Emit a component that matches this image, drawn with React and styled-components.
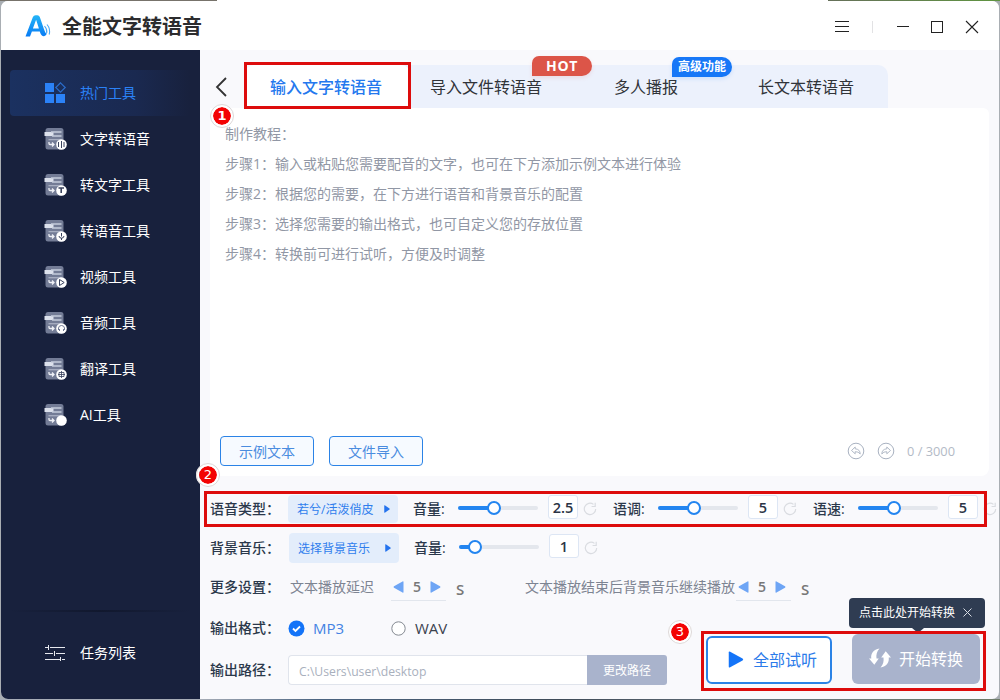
import React, { useState } from "react";
import styled, { createGlobalStyle } from "styled-components";

const GlobalStyle = createGlobalStyle`
  * {
    box-sizing: border-box;
  }
  body {
    margin: 0;
    font-family: "Open Sans", "Noto Sans CJK SC", sans-serif;
    font-size: 14px;
    color: #2b3445;
  }
  button {
    font-family: inherit;
    padding: 0;
    margin: 0;
  }
`;

const Desktop = styled.div`
  width: 1000px;
  height: 700px;
  padding: 1px;
  overflow: hidden;
  background:
    linear-gradient(90deg, #77736b 217px, #fff 217px, #fff 828px, #66705a 828px, #5f9440) top / 100% 1px no-repeat,
    linear-gradient(90deg, #a7adb7 0 200px, #4b6481 320px, #3f4b58 560px, #66727c 760px, #6e7b68) bottom / 100% 1px no-repeat,
    #a9aeb3;
`;

const Window = styled.div`
  position: relative;
  display: flex;
  flex-direction: column;
  height: 698px;
  border-radius: 7px;
  overflow: hidden;
  background: #f9f9fc;
`;

const TitleBar = styled.header`
  display: flex;
  align-items: center;
  height: 49px;
  flex: none;
  padding: 0 20px 0 23px;
  background: #fff;
`;

const AppName = styled.h1`
  margin: 0 auto 0 10px;
  padding-top: 2px;
  font-size: 20px;
  line-height: 30px;
  font-weight: 700;
  color: #2c2c2e;
`;

const Body = styled.div`
  display: flex;
  flex: 1;
  min-height: 0;
`;

const Sidebar = styled.nav`
  display: flex;
  flex-direction: column;
  width: 199px;
  padding: 20px 10px 23px 9px;
  background: #18213d;
`;

const NavItem = styled.div`
  display: flex;
  align-items: center;
  gap: 12px;
  height: 46px;
  padding: 0 0 2px 34px;
  border-radius: 4px;
  color: ${(props) => (props.$active ? "#2b82f7" : "#fff")};
  background: ${(props) =>
    props.$active ? "linear-gradient(90deg, #1b3160, #1a2950 70%, #18213d)" : "none"};

  svg {
    margin-top: 2px;
  }
`;

const NavDivider = styled.div`
  height: 2px;
  margin: auto 0 18px;
  background: linear-gradient(90deg, #18213d, #11182e 50%, #18213d);
`;

const Main = styled.main`
  flex: 1;
  min-width: 0;
`;

const TabRow = styled.div`
  display: flex;
  align-items: flex-end;
  height: 58px;
  padding-left: 14px;
`;

const BackIcon = styled.svg`
  flex: none;
  margin: 0 15px 10px 0;
`;

const Tabs = styled.div`
  display: flex;
  height: 43px;
  width: 644px;
  background: #ecf1fc;
  border-radius: 10px 10px 0 0;
`;

const Tab = styled.div`
  position: relative;
  display: flex;
  align-items: center;
  justify-content: center;
  width: ${(props) => (props.$active ? 167 : 160)}px;
  padding: 0 ${(props) => (props.$active ? 3 : 0)}px 2px 0;
  margin-right: ${(props) => (props.$active ? -5 : 0)}px;
  flex: none;
  border-radius: 10px 10px 0 0;
  font-size: 16px;
  font-weight: ${(props) => (props.$active ? 500 : 400)};
  color: ${(props) => (props.$active ? "#2478ee" : "#303338")};
  background: ${(props) => (props.$active ? "#fff" : "none")};
`;

const TabBadge = styled.span`
  position: absolute;
  left: ${(props) => props.$left}px;
  top: ${(props) => props.$top}px;
  width: 60px;
  height: 20px;
  border-radius: 7px 10px 10px 0;
  text-align: center;
  line-height: 20px;
  font-weight: 700;
  font-size: ${(props) => props.$size}px;
  letter-spacing: ${(props) => (props.$size > 12 ? 0.6 : 0)}px;
  color: #fff;
  background: ${(props) => props.$color};
  box-shadow: 0 2px 4px ${(props) => props.$color}22;
`;

const Editor = styled.section`
  display: flex;
  flex-direction: column;
  height: 368px;
  margin: 0 10px;
  padding: 11px 34px 10px 10px;
  background: #fff;
  border-radius: 0 6px 8px 8px;
`;

const Guide = styled.p`
  margin: 0;
  padding-left: 5px;
  line-height: 30px;
  color: #9197a5;
`;

const EditorFooter = styled.div`
  display: flex;
  align-items: center;
  gap: 15px;
  height: 30px;
  margin-top: auto;
`;

const OutlineButton = styled.button`
  width: 94px;
  height: 30px;
  border: 1px solid #2b83e6;
  border-radius: 4px;
  background: #f6faff;
  color: #4a8cdf;
  font-size: 14px;
`;

const EditorTools = styled.div`
  display: flex;
  align-items: center;
  gap: 12px;
  margin-left: auto;
  font-size: 12.8px;
  color: #b3bac6;
`;

const Settings = styled.section`
  padding: 15px 0 0 10px;
`;

const Row = styled.div`
  display: flex;
  align-items: center;
  height: 36px;
  margin-bottom: ${(props) => props.$after || 0}px;

  > * {
    flex-shrink: 0;
  }
`;

const RowLabel = styled.div`
  width: ${(props) => props.$width || 78}px;
  padding-bottom: 2px;
  font-weight: 500;
  white-space: nowrap;
  color: #2b384b;
`;

const Picker = styled.button`
  display: flex;
  align-items: center;
  justify-content: space-between;
  width: 110px;
  height: ${(props) => props.$height || 28}px;
  margin-right: 15px;
  padding: 0 8px 0 9px;
  border: 0;
  border-radius: 4px;
  background: #e3edfb;
  color: #2f7ded;
  font-size: 12px;
`;

const SliderLabel = styled.span`
  width: 45px;
  padding-bottom: 2px;
  font-weight: 500;
  color: #2b384b;
`;

const Track = styled.div`
  position: relative;
  width: 80px;
  height: 4px;
  margin: -2px 10px 0 0;
  border-radius: 2px;
  background: #e4e7ed;
`;

const Fill = styled.div`
  height: 4px;
  border-radius: 2px;
  background: #2385f0;
`;

const Thumb = styled.div`
  position: absolute;
  top: -5px;
  width: 14px;
  height: 14px;
  margin-left: -7px;
  border: 2px solid #2385f0;
  border-radius: 50%;
  background: #fff;
`;

const ValueBox = styled.div`
  width: 30px;
  height: 24px;
  margin: -4px 5px 0 0;
  border: 1px solid #dde6f4;
  border-radius: 3px;
  background: #fff;
  text-align: center;
  line-height: 23px;
  font-weight: 600;
  font-size: 14.5px;
`;

const ResetIcon = styled.svg`
  margin-right: 16px;
`;

const MutedText = styled.span`
  width: ${(props) => props.$width}px;
  padding-bottom: 2px;
  white-space: nowrap;
  color: #7d8492;
`;

const StepperBox = styled.div`
  display: flex;
  align-items: center;
  justify-content: space-between;
  width: 55px;
  height: 28px;
  padding: 0 5px 0 2px;
  border-bottom: 1px solid #e2e6ed;
  color: #777;
  font-weight: 600;
  font-size: 14px;
`;

const Unit = styled.span`
  width: ${(props) => props.$width}px;
  padding: 3px 0 0 10px;
  font-weight: 600;
  font-size: 15px;
  color: #777;
`;

const Radio = styled.div`
  display: flex;
  align-items: center;
  gap: 8px;
  width: ${(props) => props.$width}px;
  padding-bottom: 1px;
  font-size: 15px;
  color: ${(props) => (props.$checked ? "#4482e3" : "#3b424e")};

  svg {
    margin-top: 1px;
  }
`;

const PathInput = styled.div`
  width: 299px;
  height: 30px;
  padding-left: 10px;
  border: 1px solid #e0e4ec;
  border-right: 0;
  border-radius: 4px 0 0 4px;
  background: #fff;
  line-height: 31px;
  font-size: 12.2px;
  color: #a9b0bd;
`;

const PathButton = styled.button`
  width: 80px;
  height: 30px;
  border: 0;
  border-radius: 0 3px 3px 0;
  background: #a9b3cc;
  color: #fff;
  font-size: 12px;
`;

const Actions = styled.div`
  display: flex;
  gap: 20px;
  position: absolute;
  right: 19px;
  bottom: 15px;
`;

const ActionButton = styled.button`
  display: flex;
  align-items: center;
  justify-content: center;
  gap: ${(props) => (props.$primary ? 8 : 9)}px;
  width: ${(props) => (props.$primary ? 128 : 126)}px;
  height: ${(props) => (props.$primary ? 50 : 48)}px;
  margin-top: ${(props) => (props.$primary ? 0 : 2)}px;
  padding: 0 0 2px ${(props) => (props.$primary ? 0 : 7)}px;
  border: ${(props) => (props.$primary ? "0" : "2px solid #2b83e6")};
  border-radius: 6px;
  background: ${(props) => (props.$primary ? "#a9b3cc" : "#fff")};
  color: ${(props) => (props.$primary ? "#fff" : "#2b7bea")};
  font-size: 16px;
`;

const Tip = styled.div`
  position: absolute;
  left: 848px;
  top: 597px;
  display: flex;
  align-items: center;
  gap: 8px;
  width: 136px;
  height: 30px;
  padding: 0 0 2px 10px;
  border-radius: 4px;
  background: #2f3c52;
  color: #fff;
  font-size: 12px;
  white-space: nowrap;

  &::after {
    content: "";
    position: absolute;
    left: 63px;
    top: 30px;
    border: 6px solid transparent;
    border-top: 5px solid #2f3c52;
    border-bottom: 0;
  }
`;

const Highlight = styled.div`
  position: absolute;
  left: ${(props) => props.$x - 1}px;
  top: ${(props) => props.$y - 1}px;
  width: ${(props) => props.$w}px;
  height: ${(props) => props.$h}px;
  border: 3px solid #dd0c0c;
  pointer-events: none;
`;

const StepMark = styled.div`
  position: absolute;
  left: ${(props) => props.$x - 13}px;
  top: ${(props) => props.$y - 13}px;
  width: 24px;
  height: 24px;
  border: 3px solid #fff;
  border-radius: 50%;
  outline: 1px solid #ddd8d8;
  outline-offset: -1px;
  background: #f30303;
  background-clip: padding-box;
  color: #fff;
  text-align: center;
  line-height: 18px;
  font-family: "DejaVu Sans", sans-serif;
  font-weight: ${(props) => (props.$bold ? 700 : 400)};
  font-size: 13px;
`;

const Logo = () => (
  <svg width="28" height="24" viewBox="0 0 28 24" fill="none">
    <defs>
      <linearGradient id="logo" x1="0" y1="0" x2="0" y2="1">
        <stop offset="0" stopColor="#25b5f7" />
        <stop offset="1" stopColor="#087bf4" />
      </linearGradient>
    </defs>
    <path
      d="M1.500 22.500 8.800 3.200Q9.700 1.200 11.600 1.200h1.800q1.700 0 2.400 1.900l4.200 12.200 1.200 3q.5 1.300 1.800 1.300-.9 2.400-3 2.600-2.700.1-3.700-3.100l-.5-1.500H7.900l-1.900 4.900zM8.900 14.600h6L12.100 5.800z"
      fill="url(#logo)"
      fillRule="evenodd"
    />
    <path d="M20.500 12c2 2.200 2.600 5 2.200 7M23 10.500c2.600 3 3 6.800 2.200 10" stroke="#4aa9f5" strokeWidth="1.100" />
  </svg>
);

const WindowControls = () => (
  <svg width="144" height="16" viewBox="0 0 144 16" fill="none" stroke="#222" shapeRendering="crispEdges">
    <path d="M0 3.500h14M0 8.500h14M0 13.500h14" />
    <path d="M37.500 3v12" stroke="#e2e2e4" />
    <path d="M62 8.500h12" />
    <path d="M96.500 3.500h11v11h-11z" />
    <path d="m131 3 12 12m0-12-12 12" shapeRendering="auto" strokeWidth="1.100" />
  </svg>
);

const HotIcon = () => (
  <svg width="24" height="22" viewBox="0 0 24 22" fill="#2b82f7">
    <path d="M1 1h9v9H1zM1 12h9v9H1zM12 12h9v9h-9z" />
    <path d="m16.500.8 4.700 4.700-4.700 4.700-4.700-4.700z" fill="none" stroke="#2b6dcb" strokeWidth="1.200" />
  </svg>
);

// small marks drawn inside the round badge of each tool icon
const marks = {
  wave: <path d="M14.500 14v5M17.500 13v7M20 14v5" />,
  text: <path d="M14.500 14h5.500M17.200 14v5" strokeWidth="1.600" />,
  mic: <path d="M17.500 13v3.500M15 16q.3 2.200 2.500 2.200T20 16M17.500 18v2" />,
  play: <path d="M15.500 13.500v6l4.700-3z" />,
  headset: <path d="M14.500 18v-2q.3-2.500 3-2.500t3 2.500v2M15.500 17v2M19.500 17v2" stroke="#737c96" />,
  globe: <path d="M14 16.500h7M17.500 13v7M15 14.500h5v4h-5z" strokeWidth=".8" />,
};

const ToolIcon = ({ mark }) => (
  <svg width="24" height="22" viewBox="0 0 24 22" fill="none">
    <rect x="1.500" y="0" width="18" height="21.500" rx="2.500" fill="#737c96" />
    <path d="M.5 6h9" stroke="#dce1ec" strokeWidth="4" />
    <path d="M7 4h10.500M8 8h9.500" stroke="#c5ccdb" strokeWidth="1.500" />
    <path d="M4.500 11.700H17" stroke="#a8afc2" strokeWidth="1.300" />
    <path d="M5 14v1.500q0 1 1 1h4M8 14.500l2 2-2 2" stroke="#eef0f6" strokeWidth="1.300" />
    <circle cx="17.500" cy="16.500" r="5.300" fill="#fff" />
    <g stroke="#3a435e">{marks[mark]}</g>
  </svg>
);

const TasksIcon = () => (
  <svg width="24" height="18" viewBox="0 0 24 18" stroke="#e7e9ef" shapeRendering="crispEdges">
    <path d="M1 3.500h3M6 3.500h15M4.500 1v5M1 9.500h8M12 9.500h9M10.500 7v5M1 15.500h15M18 15.500h3M16.500 13v4" />
  </svg>
);

const HistoryIcon = ({ redo }) => (
  <svg width="18" height="18" viewBox="0 0 18 18" fill="none" stroke="#a9b2c1">
    <circle cx="9" cy="9" r="7.800" />
    <path
      d="M8.200 5 4.500 8.500l3.700 3.300V9.700q3.300-.3 5 2.300-.1-4.800-5-5.200z"
      strokeWidth=".9"
      transform={redo ? "matrix(-1 0 0 1 18 0)" : undefined}
    />
  </svg>
);

const Reset = () => (
  <ResetIcon width="14" height="14" viewBox="0 0 14 14" fill="none" stroke="#dadce1">
    <path d="M12.700 7A5.700 5.700 0 1 1 10.500 2.400" strokeWidth="1.200" />
    <path d="M12.200.8v3.700H8.600" strokeWidth="1.200" />
  </ResetIcon>
);

const Arrow = ({ left, size = 11, height = size, color = "#6ea5f5" }) => (
  <svg width={size} height={height} viewBox="0 0 11 11" preserveAspectRatio="none" fill={color}>
    <path
      d="M.5 1q0-1 1-.5l8.500 4.300q1 .7 0 1.400l-8.500 4.300q-1 .5-1-.5z"
      transform={left ? "matrix(-1 0 0 1 11 0)" : undefined}
    />
  </svg>
);

const SliderControl = ({ label, value, percent }) => {
  return (
    <>
      <SliderLabel>{label}:</SliderLabel>
      <Track>
        <Fill style={{ width: `${percent}%` }} />
        <Thumb style={{ left: `${percent}%` }} />
      </Track>
      <ValueBox>{value}</ValueBox>
      <Reset />
    </>
  );
};

const Stepper = ({ value }) => (
  <StepperBox>
    <Arrow left height={12} />
    {value}
    <Arrow height={12} />
  </StepperBox>
);

const tools = [
  { name: "文字转语音", mark: "wave" },
  { name: "转文字工具", mark: "text" },
  { name: "转语音工具", mark: "mic" },
  { name: "视频工具", mark: "play" },
  { name: "音频工具", mark: "headset" },
  { name: "翻译工具", mark: "globe" },
  { name: "AI工具" },
];

const tabs = [
  { name: "输入文字转语音" },
  { name: "导入文件转语音", badge: "HOT", color: "#dc5548", size: 14, left: 126, top: -9 },
  { name: "多人播报", badge: "高级功能", color: "#1677f7", size: 12, left: 106, top: -8 },
  { name: "长文本转语音" },
];

const guide = [
  "制作教程：",
  "步骤1：输入或粘贴您需要配音的文字，也可在下方添加示例文本进行体验",
  "步骤2：根据您的需要，在下方进行语音和背景音乐的配置",
  "步骤3：选择您需要的输出格式，也可自定义您的存放位置",
  "步骤4：转换前可进行试听，方便及时调整",
];

const App = () => {
  const [tab, setTab] = useState(0);
  const [format, setFormat] = useState("MP3");

  return (
    <Desktop>
      <GlobalStyle />
      <Window>
        <TitleBar>
          <Logo />
          <AppName>全能文字转语音</AppName>
          <WindowControls />
        </TitleBar>
        <Body>
          <Sidebar>
            <NavItem $active>
              <HotIcon />
              热门工具
            </NavItem>
            {tools.map((tool) => (
              <NavItem key={tool.name}>
                <ToolIcon mark={tool.mark} />
                {tool.name}
              </NavItem>
            ))}
            <NavDivider />
            <NavItem>
              <TasksIcon />
              任务列表
            </NavItem>
          </Sidebar>
          <Main>
            <TabRow>
              <BackIcon width="15" height="22" viewBox="0 0 15 22" fill="none" stroke="#333" strokeWidth="1.800">
                <path d="m12 2-9 9 9 9" />
              </BackIcon>
              <Tabs>
                {tabs.map((item, i) => (
                  <Tab key={item.name} $active={i === tab} onClick={() => setTab(i)}>
                    {item.name}
                    {item.badge && (
                      <TabBadge $color={item.color} $size={item.size} $left={item.left} $top={item.top}>
                        {item.badge}
                      </TabBadge>
                    )}
                  </Tab>
                ))}
              </Tabs>
            </TabRow>
            <Editor>
              {guide.map((line) => (
                <Guide key={line}>{line}</Guide>
              ))}
              <EditorFooter>
                <OutlineButton>示例文本</OutlineButton>
                <OutlineButton>文件导入</OutlineButton>
                <EditorTools>
                  <HistoryIcon />
                  <HistoryIcon redo />
                  <span>0 / 3000</span>
                </EditorTools>
              </EditorFooter>
            </Editor>
            <Settings>
              <Row $after={3}>
                <RowLabel>语音类型：</RowLabel>
                <Picker>
                  若兮/活泼俏皮
                  <Arrow size={6} height={8} color="#2473ee" />
                </Picker>
                <SliderControl label="音量" value="2.5" percent={45} />
                <SliderControl label="语调" value="5" percent={45} />
                <SliderControl label="语速" value="5" percent={45} />
              </Row>
              <Row $after={3}>
                <RowLabel $width={79}>背景音乐：</RowLabel>
                <Picker $height={30}>
                  选择背景音乐
                  <Arrow size={6} height={8} color="#2473ee" />
                </Picker>
                <SliderControl label="音量" value="1" percent={20} />
              </Row>
              <Row $after={5}>
                <RowLabel $width={80}>更多设置：</RowLabel>
                <MutedText $width={101}>文本播放延迟</MutedText>
                <Stepper value="5" />
                <Unit $width={79}>S</Unit>
                <MutedText $width={211}>文本播放结束后背景音乐继续播放</MutedText>
                <Stepper value="5" />
                <Unit $width={40}>S</Unit>
              </Row>
              <Row $after={6}>
                <RowLabel>输出格式：</RowLabel>
                {["MP3", "WAV"].map((name) => (
                  <Radio
                    key={name}
                    $checked={name === format}
                    $width={name === "MP3" ? 102 : 70}
                    onClick={() => setFormat(name)}
                  >
                    <svg width="17" height="17" viewBox="0 0 17 17" fill="none">
                      {name === format ? (
                        <>
                          <circle cx="8.500" cy="8.500" r="8" fill="#1474f8" />
                          <path d="m5 8.500 2.500 2.500 4.500-4.500" stroke="#fff" strokeWidth="1.800" />
                        </>
                      ) : (
                        <circle cx="8.500" cy="8.500" r="6.700" fill="#fff" stroke="#858a92" />
                      )}
                    </svg>
                    {name}
                  </Radio>
                ))}
              </Row>
              <Row>
                <RowLabel>输出路径：</RowLabel>
                <PathInput>C:\Users\user\desktop</PathInput>
                <PathButton>更改路径</PathButton>
              </Row>
            </Settings>
          </Main>
        </Body>

        <Actions>
          <ActionButton>
            <Arrow size={16} height={17} color="#1474f8" />
            全部试听
          </ActionButton>
          <ActionButton $primary>
            <svg width="22" height="20" viewBox="0 0 22 20" fill="#fff">
              <path d="M10.500.5C4.500 1.500 1.500 5.500 2.300 10.500H0l5.300 6.300L9.800 10.500H7.500C7 6.500 7.800 3.500 10.500.5Z" />
              <path d="M11.500 19.500c6-1 9-5 8.200-10H22l-5.300-6.300-4.500 6.300h2.300c.5 4-.3 7-3 10Z" />
            </svg>
            开始转换
          </ActionButton>
        </Actions>
        <Tip>
          点击此处开始转换
          <svg width="9" height="9" viewBox="0 0 9 9" stroke="#d8dce4">
            <path d="m.5.5 8 8m0-8-8 8" />
          </svg>
        </Tip>

        <Highlight $x={244} $y={62} $w={167} $h={47} />
        <Highlight $x={204} $y={491} $w={783} $h={36} />
        <Highlight $x={701} $y={631} $w={285} $h={60} />
        <StepMark $x={222} $y={116} $bold>1</StepMark>
        <StepMark $x={208} $y={475}>2</StepMark>
        <StepMark $x={680} $y={632}>3</StepMark>
      </Window>
    </Desktop>
  );
};

export default App;
